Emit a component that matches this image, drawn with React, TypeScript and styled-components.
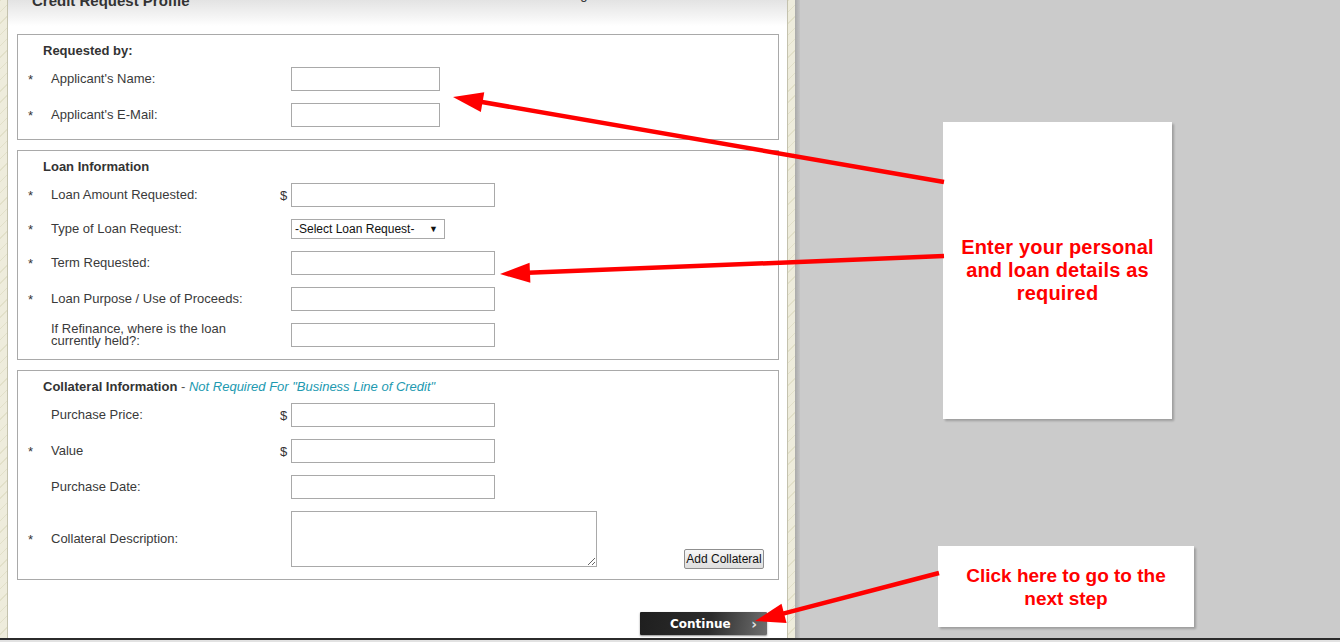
import React from "react";
import styled, { createGlobalStyle } from "styled-components";

const GlobalStyle = createGlobalStyle`
  html, body {
    margin: 0;
    padding: 0;
    overflow: hidden;
    background: #cbcbcb;
  }
  body {
    font-family: "Liberation Sans", Arial, sans-serif;
  }
`;

const Page = styled.div`
  position: relative;
  width: 1340px;
  height: 642px;
  display: flex;
  flex-direction: column;
  overflow: hidden;
`;

const Main = styled.div`
  display: flex;
  height: 638px;
  overflow: hidden;
`;

const BottomStrip = styled.div`
  height: 2px;
  border-top: 2px solid #2b2b2b;
  background: #e2e2e2;
`;

const Rail = styled.div<{ $w: number; $edge: "left" | "right" }>`
  width: ${(p) => p.$w}px;
  flex-shrink: 0;
  background: repeating-linear-gradient(
    -45deg,
    #eeecdc 0 7px,
    #e2e0c9 7px 8px
  );
  ${(p) =>
    p.$edge === "right"
      ? "border-right: 1px solid #c4c2ae;"
      : "border-left: 1px solid #c4c2ae;"}
`;

const RailShadow = styled.div`
  width: 5px;
  flex-shrink: 0;
  background: linear-gradient(to right, #a9a9a9, #c4c4c4);
`;

const Panel = styled.div`
  width: 779px;
  flex-shrink: 0;
  background: #fff;
  display: flex;
  flex-direction: column;
`;

const Header = styled.div`
  height: 26px;
  display: flex;
  padding-left: 24px;
  background: linear-gradient(to bottom, #e3e3e3 0%, #f6f6f6 70%, #ffffff 100%);
  overflow: hidden;
`;

const Title = styled.div`
  width: 528px;
  margin-top: -8px;
  font-size: 15px;
  line-height: 18px;
  font-weight: bold;
  color: #333;
`;

const Progress = styled.div`
  margin-top: -13px;
  font-size: 13px;
  line-height: 16px;
  color: #222;
`;

const Form = styled.div`
  padding: 8px 8px 0 9px;
  display: flex;
  flex-direction: column;
  gap: 10px;
`;

const Section = styled.div`
  border: 1px solid #a9a9a9;
  padding: 8px 14px 12px 10px;
  display: flex;
  flex-direction: column;
  gap: 8px;
`;

const SectionTitle = styled.div`
  padding-left: 15px;
  font-size: 13px;
  line-height: 16px;
  font-weight: bold;
  color: #333;
`;

const Note = styled.span`
  font-weight: normal;
  color: #555;

  em {
    color: #2199b0;
  }
`;

const Rows = styled.div`
  display: grid;
  grid-template-columns: 23px 229px 11px 1fr;
  row-gap: 12px;
  align-items: center;
`;

const Star = styled.span`
  font-size: 13px;
  color: #333;
`;

const Label = styled.span`
  max-width: 200px;
  font-size: 13px;
  line-height: 12px;
  color: #3a3a3a;
`;

const Dollar = styled.span`
  font-size: 13px;
  color: #333;
`;

const TextInput = styled.input<{ $w: number }>`
  box-sizing: border-box;
  width: ${(p) => p.$w}px;
  height: 24px;
  margin: 0;
  border: 1px solid #a9a9a9;
  border-radius: 0;
  background: #fff;
  font: 13px "Liberation Sans", Arial, sans-serif;
  outline: none;
`;

const SelectWrap = styled.div`
  position: relative;
  width: 154px;
  height: 20px;
`;

const Select = styled.select`
  appearance: none;
  box-sizing: border-box;
  width: 100%;
  height: 100%;
  margin: 0;
  padding: 0 0 0 3px;
  border: 1px solid #a9a9a9;
  border-radius: 0;
  background: #fff;
  font: 12px "Liberation Sans", Arial, sans-serif;
  color: #111;
  outline: none;
`;

const SelectArrow = styled.span`
  position: absolute;
  right: 7px;
  top: 4px;
  font-size: 9px;
  line-height: 12px;
  color: #111;
  pointer-events: none;
`;

const AreaCell = styled.div`
  display: flex;
  justify-content: space-between;
  align-items: flex-end;
`;

const TextArea = styled.textarea`
  box-sizing: border-box;
  width: 306px;
  height: 56px;
  margin: 0;
  border: 1px solid #a9a9a9;
  border-radius: 0;
  display: block;
  outline: none;
`;

const SmallButton = styled.button`
  width: 80px;
  height: 20px;
  margin: 0 0 -2px;
  padding: 0;
  border: 1px solid #8f8f8f;
  border-radius: 2px;
  background: linear-gradient(to bottom, #f7f7f7, #dedede);
  font: 12px "Liberation Sans", Arial, sans-serif;
  color: #111;
`;

const Footer = styled.div`
  display: flex;
  justify-content: flex-end;
  padding: 32px 20px 0 0;
`;

const ContinueButton = styled.button`
  box-sizing: border-box;
  width: 127px;
  height: 23px;
  padding: 0 10px 0 30px;
  border: none;
  border-radius: 1px;
  display: flex;
  align-items: center;
  background: linear-gradient(100deg, #1f1f1f 0%, #2c2c2c 55%, #6f6f6f 100%);
  box-shadow: 0 1px 2px rgba(0, 0, 0, 0.45);
  font: bold 12px "DejaVu Sans", "Liberation Sans", sans-serif;
  color: #fff;

  span {
    margin-left: auto;
    font-size: 14px;
    font-weight: bold;
    color: #e0e0e0;
  }
`;

const Canvas = styled.div`
  flex: 1;
  background: #cbcbcb;
  display: flex;
  flex-direction: column;
  align-items: flex-start;
`;

const Callout = styled.div<{ $w: number; $h: number; $left: number; $top: number; $size: number }>`
  box-sizing: border-box;
  width: ${(p) => p.$w}px;
  height: ${(p) => p.$h}px;
  margin: ${(p) => p.$top}px 0 0 ${(p) => p.$left}px;
  padding: 0 12px;
  background: #fff;
  box-shadow: 2px 2px 2px rgba(0, 0, 0, 0.22);
  display: flex;
  align-items: center;
  justify-content: center;
  text-align: center;
  font: bold ${(p) => p.$size}px/23px "Liberation Sans", Arial, sans-serif;
  letter-spacing: ${(p) => (p.$size > 19 ? "0.2px" : "0")};
  color: #ff0000;
`;

const Overlay = styled.svg`
  position: absolute;
  left: 0;
  top: 0;
  pointer-events: none;
`;

type Arrow = { x1: number; y1: number; x2: number; y2: number };

const arrows: Arrow[] = [
  { x1: 944, y1: 182, x2: 453, y2: 97 },
  { x1: 944, y1: 256, x2: 500, y2: 274 },
  { x1: 939, y1: 573, x2: 755, y2: 621 },
];

function ArrowShape({ x1, y1, x2, y2 }: Arrow) {
  const len = 30;
  const half = 10;
  const dx = x2 - x1;
  const dy = y2 - y1;
  const d = Math.sqrt(dx * dx + dy * dy);
  const ux = dx / d;
  const uy = dy / d;
  const bx = x2 - ux * len;
  const by = y2 - uy * len;
  const px = -uy * half;
  const py = ux * half;
  const pts = `${x2},${y2} ${bx + px},${by + py} ${bx - px},${by - py}`;
  return (
    <g>
      <line x1={x1} y1={y1} x2={bx + ux * 2} y2={by + uy * 2} stroke="#ff0000" strokeWidth={4.5} />
      <polygon points={pts} fill="#ff0000" />
    </g>
  );
}

const App = () => {
  return (
    <Page>
      <GlobalStyle />
      <Main>
        <Rail $w={7} $edge="right" />
        <Panel>
          <Header>
            <Title>Credit Request Profile</Title>
            <Progress>Progress:</Progress>
          </Header>
          <Form>
            <Section>
              <SectionTitle>Requested by:</SectionTitle>
              <Rows>
                <Star>*</Star>
                <Label>Applicant's Name:</Label>
                <span />
                <TextInput $w={149} />
                <Star>*</Star>
                <Label>Applicant's E-Mail:</Label>
                <span />
                <TextInput $w={149} />
              </Rows>
            </Section>

            <Section>
              <SectionTitle>Loan Information</SectionTitle>
              <Rows>
                <Star>*</Star>
                <Label>Loan Amount Requested:</Label>
                <Dollar>$</Dollar>
                <TextInput $w={204} />
                <Star>*</Star>
                <Label>Type of Loan Request:</Label>
                <span />
                <SelectWrap>
                  <Select defaultValue="">
                    <option value="">-Select Loan Request-</option>
                  </Select>
                  <SelectArrow>▼</SelectArrow>
                </SelectWrap>
                <Star>*</Star>
                <Label>Term Requested:</Label>
                <span />
                <TextInput $w={204} />
                <Star>*</Star>
                <Label>Loan Purpose / Use of Proceeds:</Label>
                <span />
                <TextInput $w={204} />
                <span />
                <Label>If Refinance, where is the loan currently held?:</Label>
                <span />
                <TextInput $w={204} />
              </Rows>
            </Section>

            <Section>
              <SectionTitle>
                Collateral Information{" "}
                <Note>
                  - <em>Not Required For "Business Line of Credit"</em>
                </Note>
              </SectionTitle>
              <Rows>
                <span />
                <Label>Purchase Price:</Label>
                <Dollar>$</Dollar>
                <TextInput $w={204} />
                <Star>*</Star>
                <Label>Value</Label>
                <Dollar>$</Dollar>
                <TextInput $w={204} />
                <span />
                <Label>Purchase Date:</Label>
                <span />
                <TextInput $w={204} />
                <Star>*</Star>
                <Label>Collateral Description:</Label>
                <span />
                <AreaCell>
                  <TextArea />
                  <SmallButton>Add Collateral</SmallButton>
                </AreaCell>
              </Rows>
            </Section>
          </Form>
          <Footer>
            <ContinueButton>
              Continue <span>›</span>
            </ContinueButton>
          </Footer>
        </Panel>
        <Rail $w={7} $edge="left" />
        <RailShadow />
        <Canvas>
          <Callout $w={229} $h={297} $left={143} $top={122} $size={20}>
            Enter your personal and loan details as required
          </Callout>
          <Callout $w={256} $h={81} $left={138} $top={127} $size={19}>
            Click here to go to the next step
          </Callout>
        </Canvas>
      </Main>
      <BottomStrip />
      <Overlay width={1340} height={642} viewBox="0 0 1340 642">
        {arrows.map((a, i) => (
          <ArrowShape key={i} {...a} />
        ))}
      </Overlay>
    </Page>
  );
};

export default App;
